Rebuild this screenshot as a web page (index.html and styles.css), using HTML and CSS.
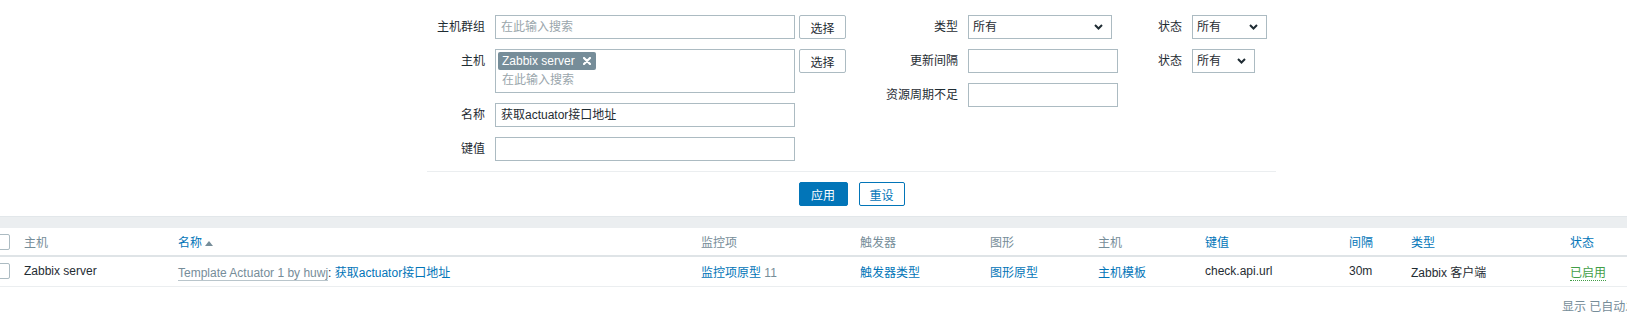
FILE: index.html
```html
<!DOCTYPE html>
<html lang="zh-CN">
<head>
    <meta charset="UTF-8">
    <title>自动发现规则</title>
    <link rel="stylesheet" href="styles.css">
</head>
<body>
    <div class="page">
        <form class="filter">
            <div class="filter-columns">
                <div class="filter-col col-main">
                    <label class="form-label">主机群组</label>
                    <div class="field">
                        <div class="input wide"><span class="placeholder">在此输入搜索</span></div>
                        <button type="button" class="btn-grey">选择</button>
                    </div>

                    <label class="form-label">主机</label>
                    <div class="field">
                        <div class="multiselect wide">
                            <span class="chip">Zabbix server
                                <svg class="chip-x" width="8" height="8" viewBox="0 0 8 8"><path d="M1 1 L7 7 M7 1 L1 7" stroke="#fff" stroke-width="2.2" stroke-linecap="round"/></svg>
                            </span>
                            <span class="placeholder ms-search">在此输入搜索</span>
                        </div>
                        <button type="button" class="btn-grey">选择</button>
                    </div>

                    <label class="form-label">名称</label>
                    <div class="field">
                        <div class="input wide">获取actuator接口地址</div>
                    </div>

                    <label class="form-label">键值</label>
                    <div class="field">
                        <div class="input wide"></div>
                    </div>
                </div>

                <div class="filter-col col-mid">
                    <label class="form-label">类型</label>
                    <div class="field">
                        <div class="select sel-type">所有
                            <svg class="arrow" width="9" height="6" viewBox="0 0 9 6"><path d="M1 1 L4.5 4.5 L8 1" fill="none" stroke="#1f2c33" stroke-width="2"/></svg>
                        </div>
                    </div>

                    <label class="form-label">更新间隔</label>
                    <div class="field">
                        <div class="input mid"></div>
                    </div>

                    <label class="form-label">资源周期不足</label>
                    <div class="field">
                        <div class="input mid"></div>
                    </div>
                </div>

                <div class="filter-col col-state">
                    <label class="form-label">状态</label>
                    <div class="field">
                        <div class="select sel-state">所有
                            <svg class="arrow" width="9" height="6" viewBox="0 0 9 6"><path d="M1 1 L4.5 4.5 L8 1" fill="none" stroke="#1f2c33" stroke-width="2"/></svg>
                        </div>
                    </div>

                    <label class="form-label">状态</label>
                    <div class="field">
                        <div class="select sel-status">所有
                            <svg class="arrow" width="9" height="6" viewBox="0 0 9 6"><path d="M1 1 L4.5 4.5 L8 1" fill="none" stroke="#1f2c33" stroke-width="2"/></svg>
                        </div>
                    </div>
                </div>
            </div>

            <div class="filter-buttons">
                <button type="button" class="btn-apply">应用</button>
                <button type="button" class="btn-alt">重设</button>
            </div>
        </form>

        <div class="filter-space"></div>

        <table class="list-table">
            <colgroup>
                <col style="width: 30px">
                <col style="width: 154px">
                <col style="width: 523px">
                <col style="width: 159px">
                <col style="width: 130px">
                <col style="width: 108px">
                <col style="width: 107px">
                <col style="width: 144px">
                <col style="width: 62px">
                <col style="width: 159px">
                <col style="width: 80px">
                <col>
            </colgroup>
            <thead>
                <tr>
                    <th><span class="checkbox"></span></th>
                    <th>主机</th>
                    <th><a class="sort">名称</a><svg class="sort-arrow" width="8" height="5" viewBox="0 0 8 5"><path d="M0 5 L4 0 L8 5 Z" fill="#768d99"/></svg></th>
                    <th>监控项</th>
                    <th>触发器</th>
                    <th>图形</th>
                    <th>主机</th>
                    <th><a class="sort">键值</a></th>
                    <th><a class="sort">间隔</a></th>
                    <th><a class="sort">类型</a></th>
                    <th><a class="sort">状态</a></th>
                    <th>信息</th>
                </tr>
            </thead>
            <tbody>
                <tr>
                    <td><span class="checkbox"></span></td>
                    <td>Zabbix server</td>
                    <td><a class="link-grey">Template Actuator 1 by huwj</a>: <a class="link">获取actuator接口地址</a></td>
                    <td><a class="link">监控项原型</a> <span class="count">11</span></td>
                    <td><a class="link">触发器类型</a></td>
                    <td><a class="link">图形原型</a></td>
                    <td><a class="link">主机模板</a></td>
                    <td>check.api.url</td>
                    <td>30m</td>
                    <td>Zabbix 客户端</td>
                    <td><a class="status-on">已启用</a></td>
                    <td></td>
                </tr>
            </tbody>
        </table>

        <div class="table-paging">显示 已自动发现的 1中的1</div>
    </div>
</body>
</html>
```

FILE: styles.css
```css
* {
    margin: 0;
    padding: 0;
    box-sizing: border-box;
}

body {
    font-family: "Liberation Sans", Arial, "Noto Sans CJK SC", sans-serif;
    font-size: 12px;
    color: #1f2c33;
    background: #ffffff;
    overflow: hidden;
}

.page {
    width: 1725px;
    margin-left: -11px;
}

/* filter */

.filter {
    width: 849px;
    margin: 0 auto;
    padding-top: 15px;
}

.filter-columns {
    display: flex;
    align-items: flex-start;
    padding-bottom: 10px;
    border-bottom: 1px solid #ebeef0;
}

.filter-col {
    display: grid;
    column-gap: 10px;
    row-gap: 10px;
    align-items: start;
}

.col-main {
    grid-template-columns: 58px auto;
}

.col-mid {
    grid-template-columns: 90px auto;
    margin-left: 22px;
}

.col-state {
    grid-template-columns: 40px auto;
    margin-left: 24px;
}

.form-label {
    line-height: 24px;
    text-align: right;
    white-space: nowrap;
}

.field {
    display: flex;
    align-items: flex-start;
    gap: 4px;
}

.input,
.select,
.multiselect {
    border: 1px solid #acbbc2;
    background: #ffffff;
    height: 24px;
    line-height: 22px;
    padding: 0 5px;
    white-space: nowrap;
}

.wide {
    width: 300px;
}

.mid {
    width: 150px;
}

.placeholder {
    color: #9aa6ac;
}

.multiselect {
    height: 44px;
    padding: 2px;
    line-height: 18px;
}

.chip {
    display: inline-flex;
    align-items: center;
    height: 18px;
    padding: 0 5px 0 4px;
    background: #768d99;
    color: #ffffff;
    border-radius: 2px;
}

.chip-x {
    margin-left: 8px;
}

.ms-search {
    display: block;
    padding-left: 4px;
    line-height: 20px;
}

.select {
    display: flex;
    align-items: center;
    justify-content: space-between;
    padding: 0 8px 0 4px;
}

.sel-type {
    width: 144px;
}

.sel-state {
    width: 75px;
}

.sel-status {
    width: 63px;
}

button {
    font-family: inherit;
    font-size: 12px;
    height: 24px;
    padding: 0 11px;
    border-radius: 2px;
    cursor: pointer;
}

.btn-grey {
    width: 47px;
    padding: 0;
    background: #ffffff;
    border: 1px solid #acbbc2;
    color: #1f2c33;
}

.filter-buttons {
    display: flex;
    justify-content: center;
    gap: 11px;
    padding: 10px 0;
}

.btn-apply {
    width: 49px;
    padding: 0;
    background: #0275b8;
    border: 1px solid #0275b8;
    color: #ffffff;
}

.btn-alt {
    width: 46px;
    padding: 0;
    background: #ffffff;
    border: 1px solid #0275b8;
    color: #0275b8;
}

.filter-space {
    height: 12px;
    background: #ebeef0;
    border-top: 1px solid #e2e7ea;
}

/* list */

.list-table {
    table-layout: fixed;
    width: 100%;
    border-collapse: collapse;
}

.list-table th {
    height: 28px;
    padding: 0 5px;
    text-align: left;
    font-weight: normal;
    color: #768d99;
    border-bottom: 2px solid #dfe4e7;
    white-space: nowrap;
}

.list-table td {
    height: 30px;
    padding: 0 5px;
    border-bottom: 1px solid #ebeef0;
    white-space: nowrap;
}

.checkbox {
    display: block;
    width: 16px;
    height: 16px;
    border: 1px solid #acbbc2;
    border-radius: 2px;
    background: #ffffff;
}

.sort,
.link {
    color: #0275b8;
}

.sort-arrow {
    margin-left: 3px;
    vertical-align: 1px;
}

.link-grey {
    color: #768d99;
    border-bottom: 1px solid #b9c5cb;
}

.count {
    color: #768d99;
}

.status-on {
    color: #429e47;
    border-bottom: 1px dotted #429e47;
}

.table-paging {
    text-align: right;
    padding: 12px 12px 0;
    color: #768d99;
    line-height: 16px;
}
```
